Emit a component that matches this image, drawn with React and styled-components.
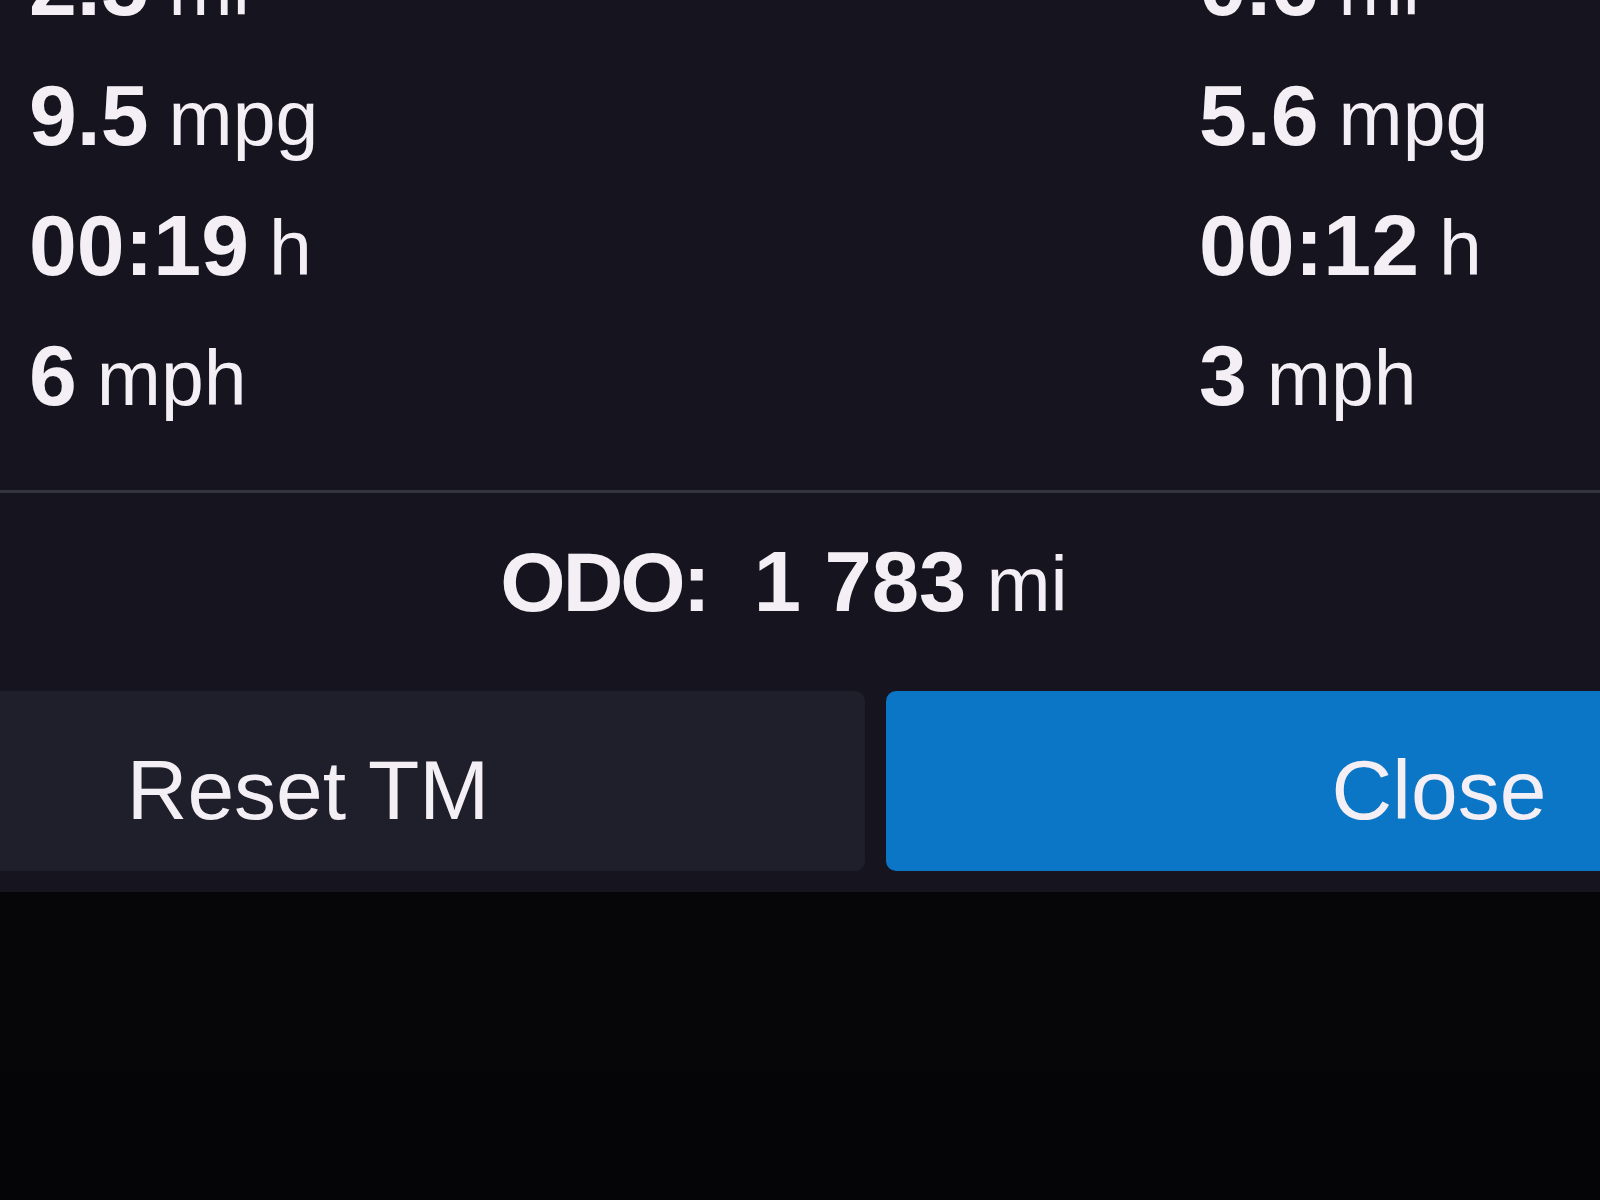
import React from 'react';
import styled, { createGlobalStyle } from 'styled-components';

const GlobalStyle = createGlobalStyle`
  html, body {
    margin: 0;
    padding: 0;
    background: #07070a;
    overflow: hidden;
  }
  body {
    width: 1600px;
    height: 1200px;
    font-family: "Liberation Sans", Arial, sans-serif;
    color: #f4eef5;
  }
`;

const Screen = styled.div`
  width: 1600px;
  height: 1200px;
  overflow: hidden;
  background: linear-gradient(#09090d, #050507);
`;

const Panel = styled.section`
  background: #16151f;
  padding-bottom: 21px;
  overflow: hidden;
`;

// the trip list is scrolled, so its first row is cut off at the top
const StatsWindow = styled.div`
  height: 440px;
  overflow: hidden;
`;

const StatsGrid = styled.div`
  margin-top: -80px;
  padding-left: 29px;
  display: grid;
  grid-template-columns: 1170px 1fr;
`;

const StatRow = styled.div`
  height: 130px;
  line-height: 130px;
  white-space: nowrap;
`;

const Value = styled.span`
  font-size: 86px;
  font-weight: 700;
  letter-spacing: 0;
`;

const Unit = styled.span`
  font-size: 77px;
  font-weight: 400;
  margin-left: 20px;
`;

const Divider = styled.hr`
  margin: 50px 0 0;
  border: 0;
  height: 3px;
  background: #34343e;
`;

const OdoRow = styled.div`
  margin-top: 29px;
  height: 120px;
  line-height: 120px;
  text-align: center;
  padding-right: 32px;
  white-space: nowrap;
`;

const OdoLabel = styled.span`
  font-size: 84px;
  font-weight: 700;
  letter-spacing: -3px;
  margin-right: 46px;
`;

const OdoValue = styled(Value)`
  font-size: 85px;
`;

const ButtonRow = styled.div`
  margin-top: 49px;
  margin-left: -249px;
  display: grid;
  grid-template-columns: 1114px 1106px;
  gap: 21px;
`;

const ActionButton = styled.button`
  height: 180px;
  border: 0;
  border-radius: 10px;
  padding: 18px 0 0;
  display: flex;
  align-items: center;
  justify-content: center;
  font-family: "Liberation Sans", Arial, sans-serif;
  font-size: 84px;
  font-weight: 400;
  color: #f4eef5;
  background: ${({ $primary }) => ($primary ? '#0b75c6' : '#1f1f2c')};
  cursor: pointer;
`;

const trips = [
  [
    { value: '2.5', unit: 'mi' },
    { value: '9.5', unit: 'mpg' },
    { value: '00:19', unit: 'h' },
    { value: '6', unit: 'mph' }
  ],
  [
    { value: '0.6', unit: 'mi' },
    { value: '5.6', unit: 'mpg' },
    { value: '00:12', unit: 'h' },
    { value: '3', unit: 'mph' }
  ]
];

const TripColumn = ({ stats }) => (
  <div>
    {stats.map((s) => (
      <StatRow key={s.unit}>
        <Value>{s.value}</Value>
        <Unit>{s.unit}</Unit>
      </StatRow>
    ))}
  </div>
);

const App = () => (
  <Screen>
    <GlobalStyle />
    <Panel>
      <StatsWindow>
        <StatsGrid>
          {trips.map((t, i) => (
            <TripColumn key={i} stats={t} />
          ))}
        </StatsGrid>
      </StatsWindow>
      <Divider />
      <OdoRow>
        <OdoLabel>ODO:</OdoLabel>
        <OdoValue>1 783</OdoValue>
        <Unit>mi</Unit>
      </OdoRow>
      <ButtonRow>
        <ActionButton>Reset TM</ActionButton>
        <ActionButton $primary>Close</ActionButton>
      </ButtonRow>
    </Panel>
  </Screen>
);

export default App;
